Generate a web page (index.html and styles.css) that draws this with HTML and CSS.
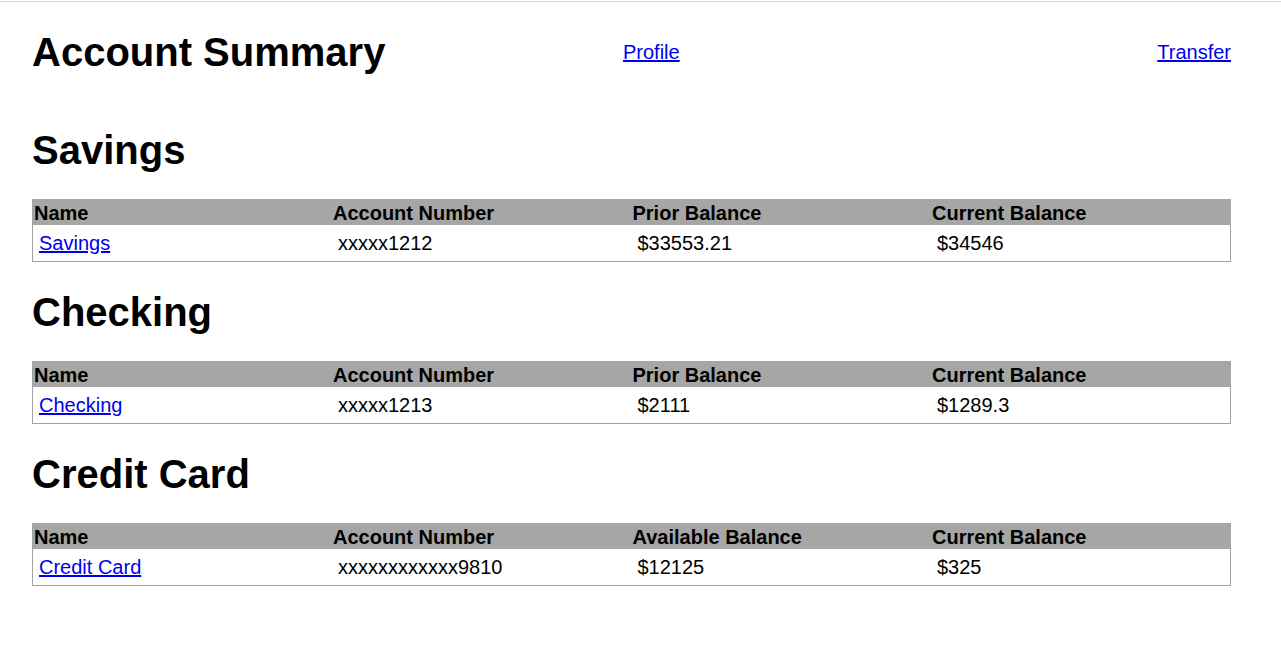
FILE: index.html
```html
<!DOCTYPE html>
<html lang="en">
<head>
<meta charset="utf-8">
<title>Account Summary</title>
<link rel="stylesheet" href="styles.css">
</head>
<body>
<div class="page">
  <header class="top">
    <h1 class="title">Account Summary</h1>
    <a class="link" href="#">Profile</a>
    <a class="link" href="#">Transfer</a>
  </header>

  <section class="section">
    <h2 class="heading">Savings</h2>
    <table class="accounts">
      <thead>
        <tr><th>Name</th><th>Account Number</th><th>Prior Balance</th><th>Current Balance</th></tr>
      </thead>
      <tbody>
        <tr><td><a class="link" href="#">Savings</a></td><td>xxxxx1212</td><td>$33553.21</td><td>$34546</td></tr>
      </tbody>
    </table>
  </section>

  <section class="section">
    <h2 class="heading">Checking</h2>
    <table class="accounts">
      <thead>
        <tr><th>Name</th><th>Account Number</th><th>Prior Balance</th><th>Current Balance</th></tr>
      </thead>
      <tbody>
        <tr><td><a class="link" href="#">Checking</a></td><td>xxxxx1213</td><td>$2111</td><td>$1289.3</td></tr>
      </tbody>
    </table>
  </section>

  <section class="section">
    <h2 class="heading">Credit Card</h2>
    <table class="accounts">
      <thead>
        <tr><th>Name</th><th>Account Number</th><th>Available Balance</th><th>Current Balance</th></tr>
      </thead>
      <tbody>
        <tr><td><a class="link" href="#">Credit Card</a></td><td>xxxxxxxxxxxx9810</td><td>$12125</td><td>$325</td></tr>
      </tbody>
    </table>
  </section>
</div>
</body>
</html>
```

FILE: styles.css
```css
html {
  padding-top: 1px;
  background: #ffffff;
}
body {
  margin: 0;
  border-top: 1px solid #d4d4d4;
  font-family: "Liberation Sans", Arial, sans-serif;
  color: #000;
  font-size: 20px;
}
.page {
  width: 1199px;
  margin-left: 32px;
  padding-top: 27px;
}
.top {
  display: grid;
  grid-template-columns: 591px 1fr auto;
  align-items: center;
  height: 46px;
  margin-bottom: 52px;
}
.title {
  margin: 0;
  font-size: 40px;
  font-weight: bold;
  line-height: 46px;
}
.link {
  color: #0000ee;
  text-decoration: underline;
}
.section {
  margin-top: 27px;
}
.heading {
  margin: 0 0 26px;
  font-size: 40px;
  line-height: 46px;
  font-weight: bold;
}
.accounts {
  width: 1199px;
  border-collapse: collapse;
  table-layout: fixed;
  border: 1px solid #a3a3a3;
  border-top: none;
}
.accounts th {
  background: #a6a6a6;
  text-align: left;
  font-weight: bold;
  padding: 3px 1px 0;
  height: 23px;
  line-height: 23px;
}
.accounts td {
  padding: 7px 6px 6px;
  line-height: 23px;
}
```
